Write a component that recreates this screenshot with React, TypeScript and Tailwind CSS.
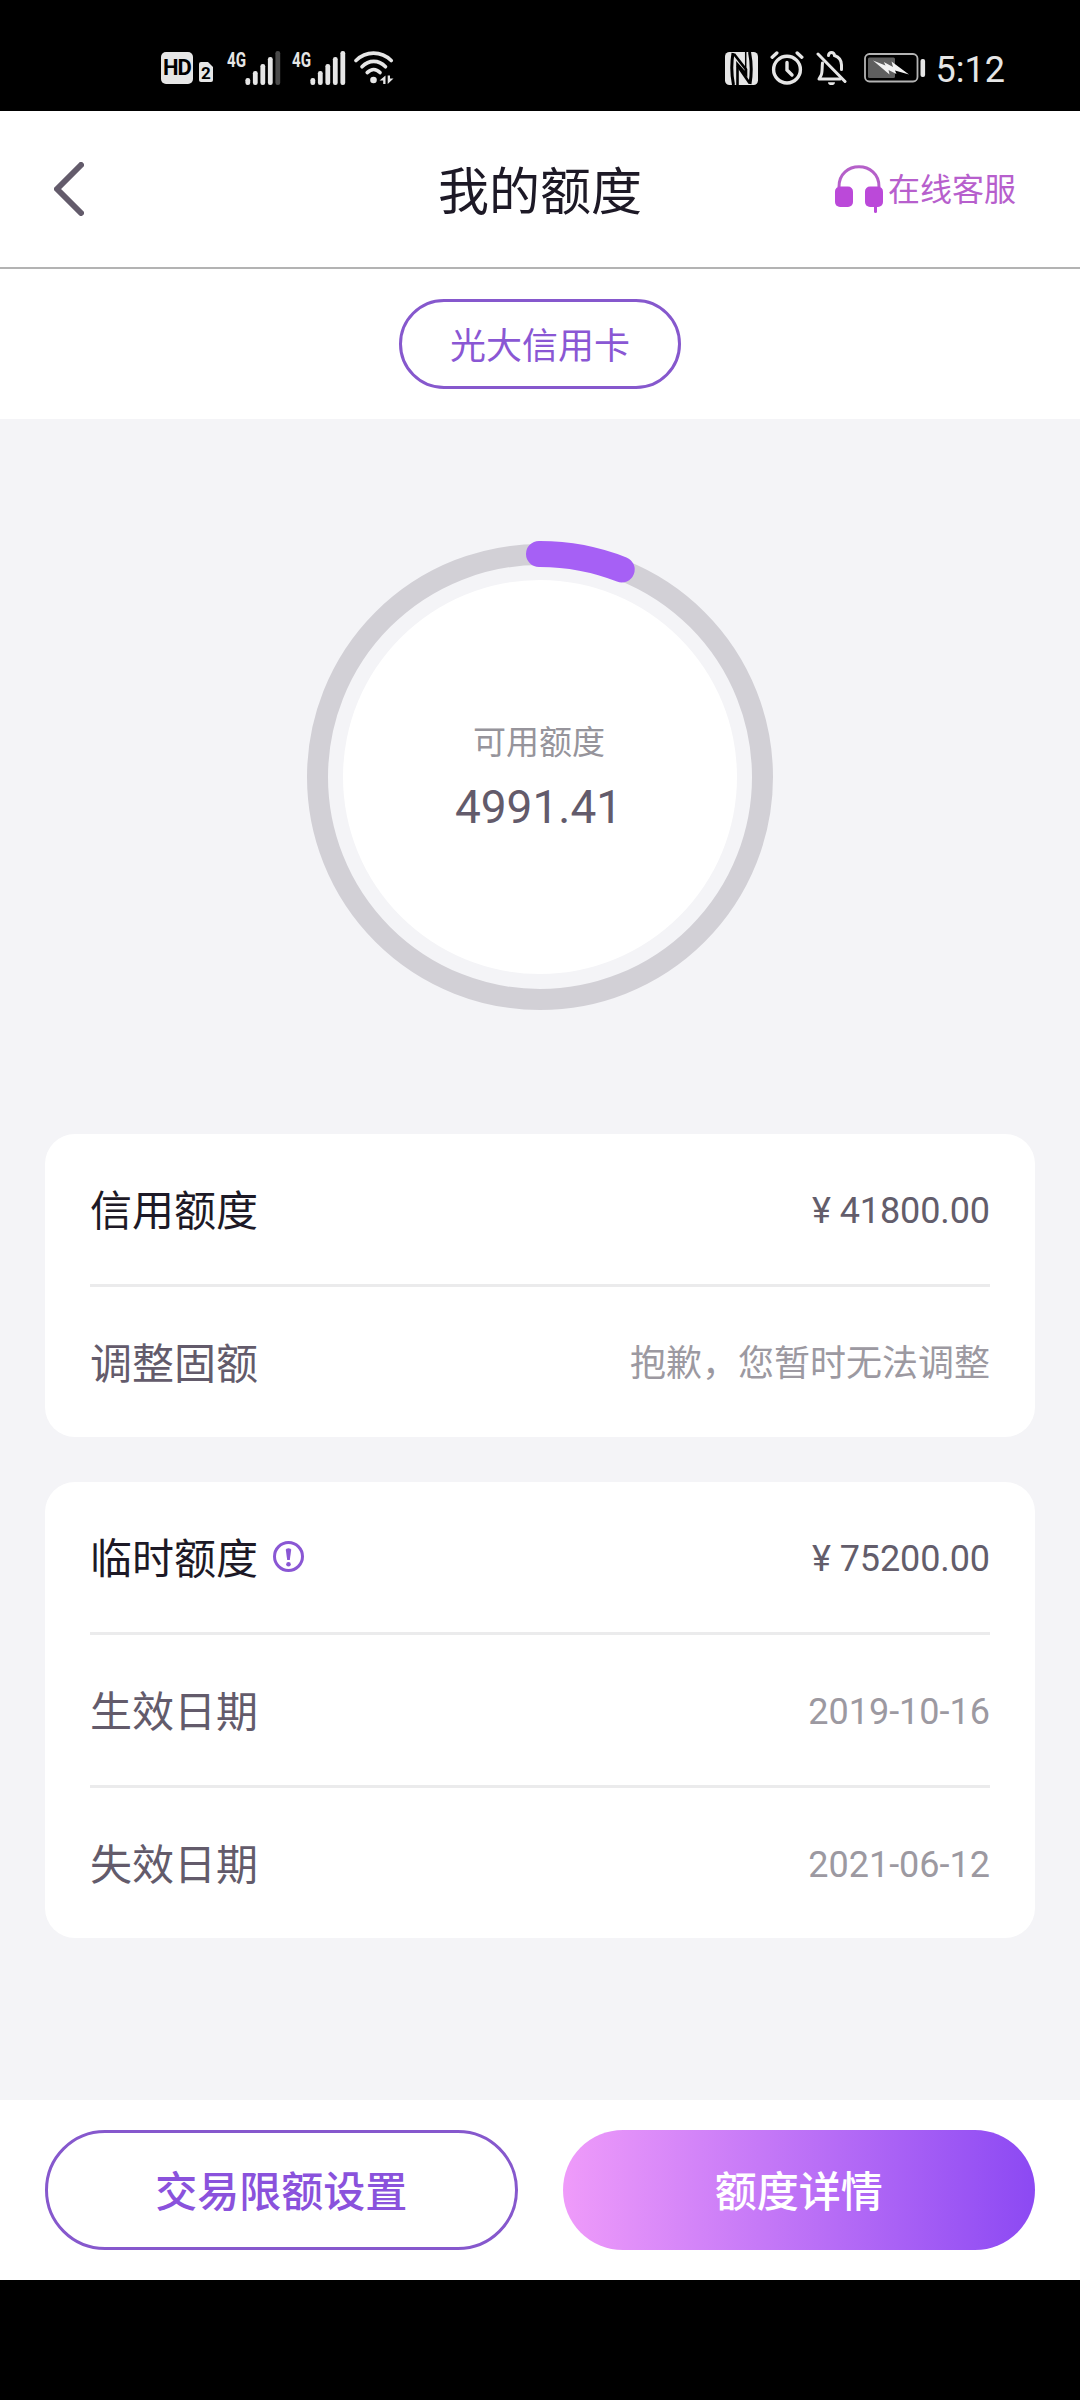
import type { ReactNode } from "react";

type LimitRow = {
  label: string;
  value: string;
  primary?: boolean;
  hint?: boolean;
};

const fixedLimit: LimitRow[] = [
  { label: "信用额度", value: "¥ 41800.00", primary: true },
  { label: "调整固额", value: "抱歉，您暂时无法调整" },
];

const temporaryLimit: LimitRow[] = [
  { label: "临时额度", value: "¥ 75200.00", primary: true, hint: true },
  { label: "生效日期", value: "2019-10-16" },
  { label: "失效日期", value: "2021-06-12" },
];

function HdIcon() {
  return (
    <div className="flex items-end">
      <div className="flex h-8 w-8 items-center justify-center rounded-[5px] bg-[#e6e6e6] text-[22px] leading-[30px] font-bold tracking-[-1px] text-black">
        HD
      </div>
      <svg className="mb-[2px] ml-[6px]" width="14" height="20" viewBox="0 0 14 20">
        <path d="M2 0h7l5 5v13a2 2 0 0 1-2 2H2a2 2 0 0 1-2-2V2a2 2 0 0 1 2-2z" fill="#e6e6e6" />
        <text x="7" y="16.5" textAnchor="middle" fontSize="17" fontWeight="700" fill="#000">
          2
        </text>
      </svg>
    </div>
  );
}

function SignalIcon({ level }: { level: number }) {
  const bars = [7, 14, 21, 28, 34];
  return (
    <svg className="overflow-visible" width="54" height="34" viewBox="0 0 54 34">
      <text
        x="0"
        y="15.5"
        fontSize="20"
        fontWeight="700"
        fill="#e6e6e6"
        textLength="19"
        lengthAdjust="spacingAndGlyphs"
      >
        4G
      </text>
      {bars.map((h, i) => (
        <rect
          key={h}
          x={18.4 + i * 7.5}
          y={34 - h}
          width="4.8"
          height={h}
          rx="2.2"
          fill={i < level ? "#e6e6e6" : "#4a4a4a"}
        />
      ))}
    </svg>
  );
}

function WifiIcon() {
  return (
    <svg width="40" height="34" viewBox="0 0 40 34" fill="none" stroke="#e6e6e6" strokeWidth="3.6" strokeLinecap="round">
      <path d="M2 9.500C12 -0.300 27 -0.300 37.200 9.500" />
      <path d="M8 15.800C15 8.600 24.500 8.600 31.500 15.800" />
      <path d="M13.200 21.600C17.500 17.400 22 17.400 26 21.600" />
      <circle cx="19.500" cy="29" r="3.300" fill="#e6e6e6" stroke="none" />
      <path d="M31.500 24.500v8.500h-2.300v-3.500H25.500zM33.700 33v-8.500h2.300v3H39.500z" fill="#e6e6e6" stroke="none" />
    </svg>
  );
}

function NfcIcon() {
  return (
    <svg width="33" height="33" viewBox="0 0 33 33" fill="none" stroke="#000">
      <rect width="33" height="33" rx="4.500" fill="#e6e6e6" stroke="none" />
      <path d="M8 1C6.500 10 6.500 23 8.500 33M25 32C26.500 23 26.500 10 24.500 0" strokeWidth="3" />
      <path d="M9 2L21 17.500V22L12.500 12.500V33" strokeWidth="2.600" />
      <path d="M12.500 13.500L24.500 31" strokeWidth="2.600" />
      <path d="M20.700 0V18" strokeWidth="1.500" />
    </svg>
  );
}

function AlarmIcon() {
  return (
    <svg width="34" height="34" viewBox="0 0 34 34" fill="none" stroke="#e6e6e6" strokeWidth="3.400" strokeLinecap="round">
      <circle cx="17" cy="18.600" r="13.400" />
      <path d="M17 11.500v7.500l5 5" />
      <path d="M2.200 6.200L6.800 2M31.800 6.200L27.200 2" />
    </svg>
  );
}

function BellOffIcon() {
  return (
    <svg width="32" height="34" viewBox="0 0 32 34" fill="none" stroke="#e6e6e6" strokeWidth="3" strokeLinecap="round">
      <path d="M2 3L29 30.500" />
      <path d="M12.500 4.500a3 3 0 0 1 6 0c5 1.800 7 5 7 9.500v4.500" />
      <path d="M6.500 12c-.600 5 0 10-1.500 12.500L3 28h21" strokeLinejoin="round" />
      <path d="M12 31.200h7a3.500 3 0 0 1-7 0z" fill="#e6e6e6" stroke="none" />
    </svg>
  );
}

function BatteryIcon() {
  return (
    <svg width="62" height="30" viewBox="0 0 62 30">
      <rect x="1" y="1" width="52.500" height="27.500" rx="4.500" fill="none" stroke="#b4b4b4" strokeWidth="1.800" />
      <rect x="4" y="4.500" width="27" height="20.500" rx="1.500" fill="#5f5f5f" />
      <path d="M9 7.500L21.500 12.500L19.800 9L29 14L27.500 8.500L45 21.500L31 17.500L32.500 21L24.500 17L25.500 21.500z" fill="#f2f2f2" />
      <rect x="56.500" y="6" width="4.600" height="18" rx="2" fill="#e6e6e6" />
    </svg>
  );
}

function StatusBar() {
  return (
    <div className="flex h-[111px] shrink-0 bg-black pr-[75px] pl-[161px]">
      <div className="box-content flex h-[34px] flex-1 items-start pt-[51px]">
        <div className="mt-px">
          <HdIcon />
        </div>
        <div className="ml-[14px]">
          <SignalIcon level={4} />
        </div>
        <div className="ml-[11px]">
          <SignalIcon level={5} />
        </div>
        <div className="ml-[8px]">
          <WifiIcon />
        </div>
      </div>
      <div className="box-content flex h-[34px] items-center pt-[51px]">
        <NfcIcon />
        <div className="ml-3">
          <AlarmIcon />
        </div>
        <div className="ml-3">
          <BellOffIcon />
        </div>
        <div className="ml-4">
          <BatteryIcon />
        </div>
        <span className="ml-[10px] pt-[3px] text-[36px] leading-[34px] text-[#e6e6e6]">5:12</span>
      </div>
    </div>
  );
}

function Header() {
  return (
    <header className="grid h-[158px] shrink-0 grid-cols-[1fr_auto_1fr] items-center border-b-2 border-[#b3b3b3]">
      <svg
        className="ml-[54px]"
        width="30"
        height="54"
        viewBox="0 0 30 54"
        fill="none"
        stroke="#635b6b"
        strokeWidth="6"
        strokeLinecap="round"
        strokeLinejoin="round"
      >
        <path d="M27 3L3 27L27 51" />
      </svg>
      <h1 className="pt-[7px] text-[51px] leading-[60px] text-[#1d1926]">我的额度</h1>
      <div className="mr-16 flex items-center justify-end gap-[5px]">
        <svg width="48" height="48" viewBox="0 0 48 48" fill="#bb49d9">
          <path d="M4 22C3.500 -5 44.500 -5 44 22" fill="none" stroke="#b560c9" strokeWidth="3" />
          <rect y="21.500" width="18" height="20.500" rx="5" />
          <rect x="30" y="21.500" width="18" height="20.500" rx="5" />
          <path d="M39 40h3v6.500a1.500 1.500 0 0 1-3 0z" />
        </svg>
        <span className="pt-[2px] text-[32px] leading-10 text-[#b75fcd]">在线客服</span>
      </div>
    </header>
  );
}

function LimitRing() {
  return (
    <div className="grid h-[466px] w-[466px] place-items-center">
      <svg
        className="col-start-1 row-start-1 overflow-visible"
        width="466"
        height="466"
        viewBox="-233 -233 466 466"
        fill="none"
      >
        <circle r="222.500" stroke="#d2d0d6" strokeWidth="21" />
        <circle r="197" fill="#fff" />
        <path d="M-1 -223A223 223 0 0 1 81.700 -207.500" stroke="#a660f5" strokeWidth="26" strokeLinecap="round" />
      </svg>
      <div className="col-start-1 row-start-1 flex flex-col items-center pt-1 pr-[2px]">
        <span className="text-[33px] leading-[48px] text-[#96949b]">可用额度</span>
        <span className="mt-2 pr-px text-[46px] leading-[64px] text-[#635b6b]">4991.41</span>
      </div>
    </div>
  );
}

function HintIcon() {
  return (
    <svg className="mb-[2px]" width="31" height="31" viewBox="0 0 31 31" fill="#8a57d4">
      <circle cx="15.500" cy="15.500" r="14" fill="none" stroke="#8a57d4" strokeWidth="3" />
      <path d="M12.800 8.800a2.700 1.500 0 0 1 5.400 0L16.800 19h-2.600z" />
      <circle cx="15.500" cy="23.300" r="2.300" />
    </svg>
  );
}

function LimitCard({ rows }: { rows: LimitRow[] }) {
  return (
    <div className="divide-y-[3px] divide-[#ebebec] rounded-[30px] bg-white px-[45px]">
      {rows.map((row) => (
        <div key={row.label} className="box-content flex h-[150px] items-center justify-between">
          <div className="flex items-center gap-[15px]">
            <span className={row.primary ? "pt-1 text-[42px] text-[#1d1926]" : "pt-1 text-[42px] text-[#635b6b]"}>
              {row.label}
            </span>
            {row.hint && <HintIcon />}
          </div>
          <span
            className={
              row.primary
                ? "pt-1 text-[36px] tracking-[-0.1px] text-[#635d6b]"
                : "pt-1 text-[36px] text-[#9c99a1]"
            }
          >
            {row.value}
          </span>
        </div>
      ))}
    </div>
  );
}

function PillButton({ className, children }: { className: string; children: ReactNode }) {
  return (
    <button
      className={`flex h-[120px] w-full items-center justify-center rounded-full pt-1 text-[42px] font-medium ${className}`}
    >
      {children}
    </button>
  );
}

export default function App() {
  return (
    <div className="flex h-[2400px] w-[1080px] flex-col overflow-hidden bg-white font-[Roboto,'Noto_Sans_CJK_SC',sans-serif]">
      <StatusBar />
      <Header />
      <div className="flex h-[150px] shrink-0 items-center justify-center">
        <button className="flex h-[90px] w-[282px] items-center justify-center rounded-full border-[3px] border-[#8658cd] pt-[5px] text-[36px] text-[#8a57d4]">
          光大信用卡
        </button>
      </div>
      <main className="flex flex-1 flex-col bg-[#f4f4f7] px-[45px] pt-[125px]">
        <div className="flex justify-center">
          <LimitRing />
        </div>
        <div className="mt-[124px] flex flex-col gap-[45px]">
          <LimitCard rows={fixedLimit} />
          <LimitCard rows={temporaryLimit} />
        </div>
      </main>
      <footer className="grid h-[180px] shrink-0 grid-cols-2 items-center gap-[45px] px-[45px]">
        <PillButton className="border-[3px] border-[#8658cd] text-[#8a52dc]">交易限额设置</PillButton>
        <PillButton className="bg-linear-to-r/srgb from-[#ef9bfa] to-[#8c49f3] text-white">额度详情</PillButton>
      </footer>
      <div className="h-[120px] shrink-0 bg-black" />
    </div>
  );
}
